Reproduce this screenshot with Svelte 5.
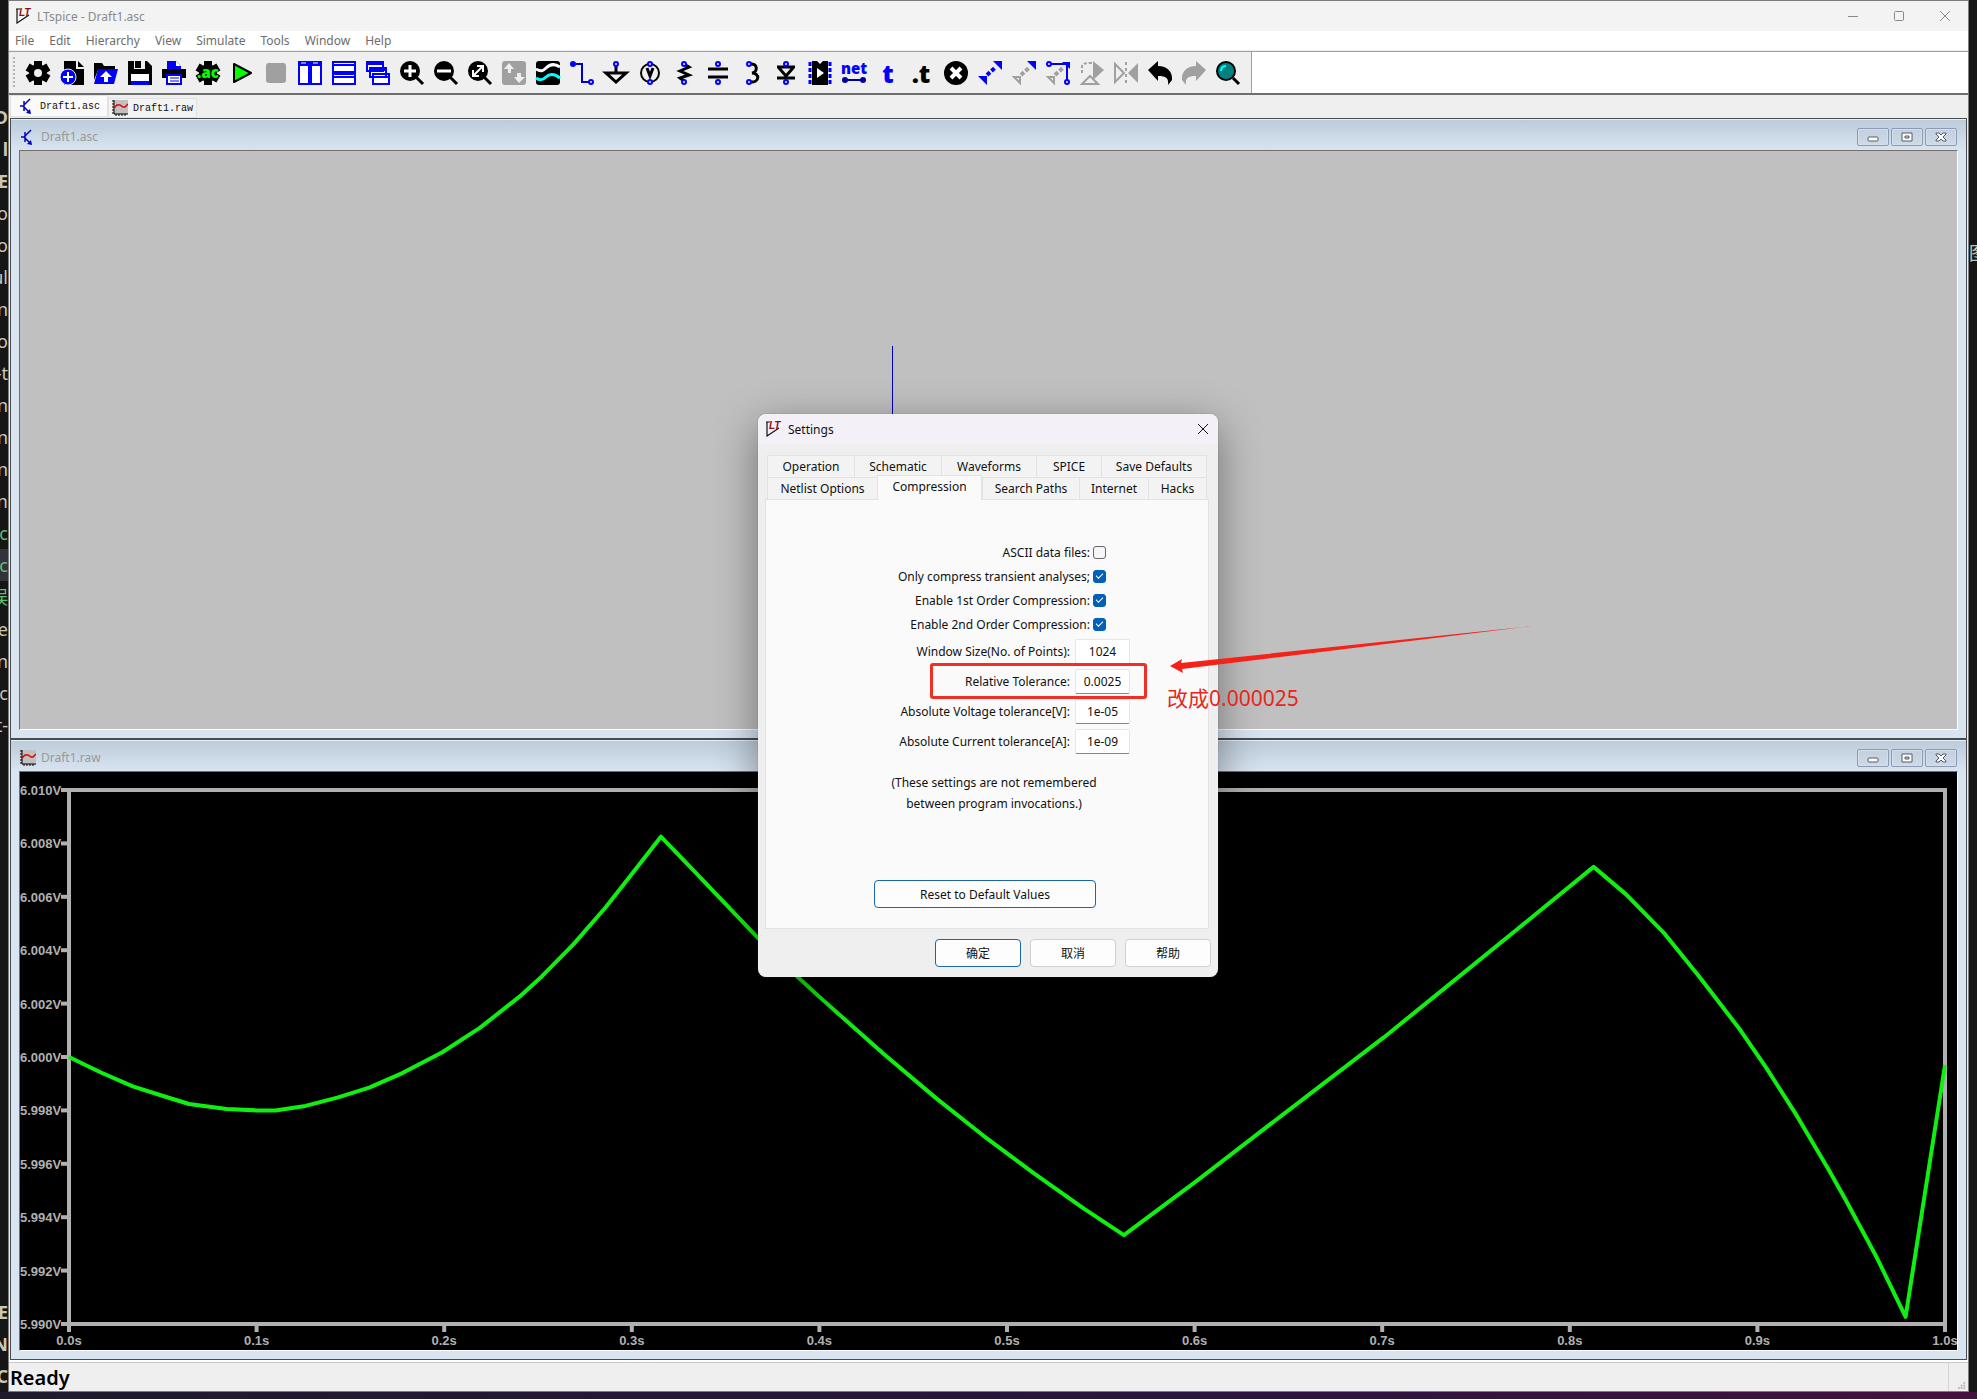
<script lang="ts">
  type Tool = { name: string; svg: string };

  const menus = ['File', 'Edit', 'Hierarchy', 'View', 'Simulate', 'Tools', 'Window', 'Help'];

  const gear =
    '<circle cx="12" cy="12" r="9"/><path d="M8 0h8v24H8z"/><path d="M8 0h8v24H8z" transform="rotate(60 12 12)"/><path d="M8 0h8v24H8z" transform="rotate(120 12 12)"/>';
  const lens = '<circle cx="10" cy="10" r="10"/><path d="M16 16l7 7" stroke="#000" stroke-width="3"/>';
  const pin = (x: number, y: number) =>
    `<circle cx="${x}" cy="${y}" r="2" fill="#efefef" stroke="#00f" stroke-width="2"/>`;
  const bold = 'font-family="Open Sans, sans-serif" font-weight="800"';

  const tools: Tool[] = [
    { name: 'Settings', svg: gear + '<circle cx="12" cy="12" r="4" fill="#efefef"/>' },
    {
      name: 'New schematic',
      svg: '<path d="M4 0h12v8h8v16H4z"/><path d="M18 0l6 6h-6z"/><circle cx="8" cy="16" r="8" fill="#00f" stroke="#efefef"/><path d="M8 11v10M3 16h10" stroke="#fff" stroke-width="2"/>',
    },
    {
      name: 'Open',
      svg: '<path d="M0 2h8l2 3h11v4H4L0 19z"/><path d="M4 8h20l-4 15H0z" fill="#00f"/><path d="M12 10l6 6h-4v5h-4v-5H6z" fill="#fff"/>',
    },
    {
      name: 'Save',
      svg: '<path d="M0 0h19l5 5v19H0z"/><path d="M6 0h11v8H6z" fill="#efefef"/><path d="M7 0h6v7H7z"/><path d="M3 13h18v11H3z" fill="#fff"/><path d="M3 20h18v4H3z" fill="#00f"/>',
    },
    {
      name: 'Print',
      svg: '<path d="M5 0h9l5 5v3H5z" fill="#00f"/><path d="M14 0v5h5z" fill="#fff"/><path d="M0 8h24v9H0z"/><path d="M5 14h14v9H5z" fill="#fff" stroke="#00f" stroke-width="2"/><path d="M8 17h9M8 20h9" stroke="#00f"/>',
    },
    {
      name: 'Configure analysis',
      svg: gear + `<text x="12" y="17" text-anchor="middle" font-size="15" fill="#0f0" ${bold}>.ac</text>`,
    },
    { name: 'Run', svg: '<path d="M4 3l17 9-17 9z" fill="#0f0" stroke="#000" stroke-width="2" stroke-linejoin="round"/>' },
    { name: 'Stop', svg: '<rect x="2" y="2" width="20" height="20" rx="3" fill="#a0a0a0"/>' },
    {
      name: 'Tile vertically',
      svg: '<path d="M1 1h10v22H1zM13 1h10v22H13z" fill="#fff" stroke="#00f" stroke-width="2"/><path d="M0 0h24v5H0z" fill="#00f"/><path d="M3 2h5M15 2h5" stroke="#fff"/>',
    },
    {
      name: 'Tile horizontally',
      svg: '<path d="M1 1h22v10H1zM1 13h22v10H1z" fill="#fff" stroke="#00f" stroke-width="2"/><path d="M1 4h22M1 16h22" stroke="#00f" stroke-width="2"/>',
    },
    {
      name: 'Cascade',
      svg: '<g fill="#fff" stroke="#00f" stroke-width="2"><path d="M1 1h16v9H1zM4 7h16v9H4zM7 13h16v10H7z"/><path d="M1 3h16M4 9h16M7 16h16"/></g>',
    },
    { name: 'Zoom in', svg: lens + '<path d="M10 4v12M4 10h12" stroke="#fff" stroke-width="3"/>' },
    { name: 'Zoom out', svg: lens + '<path d="M3 10h14" stroke="#fff" stroke-width="3"/>' },
    {
      name: 'Zoom to fit',
      svg: lens + '<path d="M5 15l10-10M9 5h6v6M5 9v6h6" stroke="#fff" stroke-width="2" fill="none"/>',
    },
    {
      name: 'Autorange',
      svg: '<rect width="24" height="24" rx="3" fill="#a0a0a0"/><path d="M7 2l5 6H9v4H6V8H2zM17 22l-5-6h3v-4h4v4h4z" fill="#efefef"/>',
    },
    {
      name: 'Waveforms',
      svg: '<rect width="24" height="24" rx="3"/><path d="M0 8c5 3 7 2 10-1s8-5 14-1" stroke="#fff" stroke-width="3" fill="none"/><path d="M0 17c4 3 7 2 10-1s8-4 14 1" stroke="#0ff" stroke-width="3" fill="none"/>',
    },
    {
      name: 'Wire',
      svg: '<path d="M3 3h9v18h7" stroke="#00c" stroke-width="2" fill="none"/><circle cx="3" cy="3" r="3" fill="#00f"/>' + pin(21, 21),
    },
    { name: 'Ground', svg: '<path d="M12 3v9M2 12h20l-10 9z" stroke="#000" stroke-width="3" fill="none"/>' + pin(12, 3) },
    {
      name: 'Voltage source',
      svg: '<circle cx="12" cy="12" r="9" fill="none" stroke="#000" stroke-width="2"/><path d="M9 7l3 8 3-8" stroke="#000" stroke-width="3" fill="none"/>' + pin(12, 3) + pin(12, 21),
    },
    {
      name: 'Resistor',
      svg: '<path d="M12 3l5 3-9 4 9 4-9 3 4 3" stroke="#000" stroke-width="3" fill="none"/>' + pin(12, 3) + pin(12, 21),
    },
    { name: 'Capacitor', svg: '<path d="M2 8h20M2 16h20" stroke="#000" stroke-width="3"/>' + pin(12, 3) + pin(12, 21) },
    {
      name: 'Inductor',
      svg: '<path d="M10 3c8-1 8 8 2 9 8 0 8 10-2 9" stroke="#000" stroke-width="3" fill="none"/>' + pin(9, 3) + pin(9, 21),
    },
    {
      name: 'Diode',
      svg: '<path d="M3 6h18M5 7l7 8 7-8M3 17h18" stroke="#000" stroke-width="3" fill="none"/>' + pin(12, 3) + pin(12, 21),
    },
    {
      name: 'Component',
      svg: '<path d="M4 0h5l3 3 3-3h5v24H4z"/><path d="M9 7l7 5-7 5z" fill="#fff"/><path d="M2 1v22M22 1v22" stroke="#00f" stroke-width="3" stroke-dasharray="4 2"/>',
    },
    {
      name: 'Net name',
      svg: `<text x="12" y="13" text-anchor="middle" font-size="15" fill="#00f" ${bold}>net</text><path d="M2 19h20" stroke="#00009c" stroke-width="2"/><circle cx="3" cy="19" r="3" fill="#00009c"/><circle cx="21" cy="19" r="3" fill="#00009c"/>`,
    },
    { name: 'Text', svg: `<text x="12" y="22" text-anchor="middle" font-size="25" fill="#00f" ${bold}>t</text>` },
    { name: 'SPICE directive', svg: `<text x="11" y="22" text-anchor="middle" font-size="25" ${bold}>.t</text>` },
    {
      name: 'Delete',
      svg: '<circle cx="12" cy="12" r="12"/><path d="M7 7l10 10M17 7L7 17" stroke="#fff" stroke-width="4"/>',
    },
    {
      name: 'Copy',
      svg: '<path d="M15 0h9v9zM0 15h9v9z" fill="#00f"/><path d="M9 14l9-8" stroke="#00f" stroke-width="4" stroke-dasharray="4 2"/>',
    },
    {
      name: 'Move',
      svg: '<path d="M15 0h9v9z" fill="#00f"/><path d="M2 16h6v6z" fill="none" stroke="#a0a0a0" stroke-width="2"/><path d="M9 14l9-8" stroke="#a0a0a0" stroke-width="4" stroke-dasharray="4 2"/>',
    },
    {
      name: 'Drag',
      svg: '<path d="M3 3h18v18" fill="none" stroke="#00f" stroke-width="2"/><path d="M16 1h8v7z" fill="#00f"/><path d="M2 16h6v6z" fill="none" stroke="#a0a0a0" stroke-width="2"/><path d="M9 14l9-8" stroke="#a0a0a0" stroke-width="4" stroke-dasharray="4 2"/>' + pin(3, 3) + pin(21, 21),
    },
    {
      name: 'Rotate',
      svg: '<path d="M13 0l11 9-11 10z" fill="#a0a0a0"/><path d="M2 12V5c0-2 3-3 10-3" fill="none" stroke="#a0a0a0" stroke-width="2" stroke-dasharray="3 2"/><path d="M2 23l8-8 8 8z" fill="none" stroke="#a0a0a0" stroke-width="2"/>',
    },
    {
      name: 'Mirror',
      svg: '<path d="M1 3l9 9-9 9z" fill="none" stroke="#a0a0a0" stroke-width="2"/><path d="M24 2v20L14 12z" fill="#a0a0a0"/><path d="M12 1v22" stroke="#a0a0a0" stroke-width="2" stroke-dasharray="3 3"/>',
    },
    { name: 'Undo', svg: '<path d="M0 9l10-9v5c9 0 15 6 14 14l-4 5c1-7-2-9-10-9v5z"/>' },
    { name: 'Redo', svg: '<path d="M24 9L14 0v5C5 5-1 11 0 19l4 5c-1-7 2-9 10-9v5z" fill="#a0a0a0"/>' },
    {
      name: 'Find',
      svg: '<circle cx="10" cy="10" r="9" fill="#008080" stroke="#000" stroke-width="2"/><path d="M17 17l6 6" stroke="#000" stroke-width="3"/><path d="M5 10c0-3 2-5 5-5" stroke="#0ff" stroke-width="2" fill="none"/>',
    },
  ];

  // text of the editor behind the window, cut off by it
  const behindTop = ['D', 'l', 'E', 'o', 'o', 'ul', 'n', 'o', '-t', 'n', 'n', 'n', 'un', 'c', 'c', '误', 've', 'n', 'c', 't-'];
  const behindBottom = ['E', 'N', 'C'];

  const upperTabs = ['Operation', 'Schematic', 'Waveforms', 'SPICE', 'Save Defaults'];
  const lowerTabs = ['Netlist Options', 'Compression', 'Search Paths', 'Internet', 'Hacks'];

  let checks = [
    { id: 'ascii', label: 'ASCII data files:', on: false },
    { id: 'transient', label: 'Only compress transient analyses;', on: true },
    { id: 'first', label: 'Enable 1st Order Compression:', on: true },
    { id: 'second', label: 'Enable 2nd Order Compression:', on: true },
  ];

  let fields = [
    { id: 'points', label: 'Window Size(No. of Points):', value: '1024' },
    { id: 'reltol', label: 'Relative Tolerance:', value: '0.0025' },
    { id: 'vtol', label: 'Absolute Voltage tolerance[V]:', value: '1e-05' },
    { id: 'itol', label: 'Absolute Current tolerance[A]:', value: '1e-09' },
  ];

  // [seconds, millivolts above 6V]
  const trace = [
    [0, 0], [0.017, -0.58], [0.034, -1.1], [0.051, -1.48], [0.064, -1.76], [0.084, -1.95], [0.1, -2],
    [0.11, -2], [0.126, -1.83], [0.143, -1.52], [0.16, -1.15], [0.178, -0.59], [0.199, 0.18],
    [0.219, 1.09], [0.24, 2.25], [0.252, 3.02], [0.269, 4.23], [0.286, 5.6], [0.299, 6.76],
    [0.3155, 8.25], [0.333, 6.98], [0.353, 5.51], [0.369, 4.33], [0.389, 2.96], [0.4, 2.25],
    [0.434, 0.13], [0.462, -1.53], [0.4875, -2.95], [0.514, -4.34], [0.541, -5.68], [0.5623, -6.67],
    [0.602, -4.59], [0.635, -2.8], [0.669, -0.98], [0.701, 0.74], [0.736, 2.73], [0.77, 4.67],
    [0.8127, 7.12], [0.83, 6.09], [0.85, 4.66], [0.87, 2.92], [0.891, 1.0], [0.905, -0.44],
    [0.921, -2.2], [0.938, -4.22], [0.947, -5.35], [0.9637, -7.52], [0.979, -9.73], [1, -0.3],
  ];

  const plot = { left: 49, right: 1925, top: 18, bottom: 552 };
  const px = (t: number) => plot.left + t * (plot.right - plot.left);
  const py = (mv: number) => plot.top + ((10 - mv) / 20) * (plot.bottom - plot.top);
  const points = trace.map(([t, v]) => `${px(t).toFixed(1)},${py(v).toFixed(1)}`).join(' ');
  const ticks = Array.from({ length: 11 }, (_, i) => i);
</script>

{#snippet logo()}
  <svg class="logo" viewBox="0 0 16 16" aria-hidden="true">
    <path d="M1 1v14l12-8" fill="none" stroke="#111" stroke-width="1.2" />
    <path d="M0 1h4" stroke="#111" />
    <text x="3" y="8" font-family="Liberation Sans, sans-serif" font-size="10" font-weight="bold" font-style="italic" fill="#8a0f14">LT</text>
  </svg>
{/snippet}

{#snippet transistor()}
  <svg class="doc-icon" viewBox="0 0 16 16" aria-hidden="true">
    <path d="M1 8h4M5 3v10M5 7l6-6M5 9l5 5" fill="none" stroke="#0000c0" stroke-width="1.5" />
    <path d="M12 16l-5-1 4-4z" fill="#0000c0" />
  </svg>
{/snippet}

{#snippet chart()}
  <svg class="doc-icon" viewBox="0 0 16 16" aria-hidden="true">
    <path d="M2 0h14v14H2z" fill="#c0c0c0" />
    <path d="M2 0v14h14M0 1h2M0 4h2M0 7h2M0 10h2M0 13h2M4 14v2M7 14v2M10 14v2M13 14v2" fill="none" stroke="#000" />
    <path d="M2 8l3-3 3 0 3 2 2 0 3-3" fill="none" stroke="#e00000" stroke-width="1.5" />
  </svg>
{/snippet}

{#snippet caption()}
  <div class="mdi-buttons">
    <button type="button" aria-label="Minimize">
      <svg viewBox="0 0 12 10"><rect x="1" y="5" width="10" height="4" rx="1" fill="#fff" stroke="#555a66" /></svg>
    </button>
    <button type="button" aria-label="Maximize">
      <svg viewBox="0 0 12 10"><path d="M1 1h10v8H1z" fill="#fff" stroke="#555a66" /><path d="M4 4h4v2H4z" fill="#ccd6e4" stroke="#555a66" /></svg>
    </button>
    <button type="button" aria-label="Close">
      <svg viewBox="0 0 12 10"><path d="M1 1h3l2 2 2-2h3v1L8 5l3 3v1H8L6 7 4 9H1V8l3-3-3-3z" fill="#fff" stroke="#555a66" /></svg>
    </button>
  </div>
{/snippet}

<div class="desktop">
  <div class="behind" aria-hidden="true">
    <div>
      {#each behindTop as s, i}
        <span class:green={i > 12 && i < 16} class:lit={i === 14} class:strong={i < 3}>{s}</span>
      {/each}
    </div>
    <div>
      {#each behindBottom as s}
        <span class="strong">{s}</span>
      {/each}
    </div>
  </div>

  <main class="app">
    <header class="titlebar">
      {@render logo()}
      <span class="title">LTspice - Draft1.asc</span>
      <div class="controls">
        <button type="button" aria-label="Minimize"><svg viewBox="0 0 10 10"><path d="M0 5.500h10" /></svg></button>
        <button type="button" aria-label="Maximize"><svg viewBox="0 0 10 10"><rect x=".5" y=".5" width="9" height="9" rx="1" /></svg></button>
        <button type="button" aria-label="Close"><svg viewBox="0 0 10 10"><path d="M0 0l10 10M10 0L0 10" /></svg></button>
      </div>
    </header>

    <nav class="menu">
      {#each menus as m}
        <button type="button">{m}</button>
      {/each}
    </nav>

    <div class="toolrow">
      <div class="toolbar" role="toolbar" aria-label="Tools">
        <span class="grip"></span>
        {#each tools as t}
          <button type="button" aria-label={t.name}>
            <svg viewBox="0 0 24 24">{@html t.svg}</svg>
          </button>
        {/each}
      </div>
    </div>

    <div class="doc-tabs">
      <button type="button" class="active">{@render transistor()}Draft1.asc</button>
      <button type="button">{@render chart()}Draft1.raw</button>
    </div>

    <div class="mdi">
      <section class="child schematic">
        <header>
          {@render transistor()}
          <h2>Draft1.asc</h2>
          {@render caption()}
        </header>
        <div class="client sheet">
          <span class="wire"></span>
        </div>
      </section>

      <section class="child">
        <header>
          {@render chart()}
          <h2>Draft1.raw</h2>
          {@render caption()}
        </header>
        <div class="client">
          <svg class="plot" viewBox="0 0 1937 578" role="img" aria-label="Waveform">
            <rect x={plot.left} y={plot.top} width={plot.right - plot.left} height={plot.bottom - plot.top} class="axis" />
            {#each ticks as i}
              <path class="axis" d="M41 {py(10 - 2 * i)}H{plot.left}" />
              <text x="0" y={py(10 - 2 * i) + 5}>{(6.01 - 0.002 * i).toFixed(3)}V</text>
              <path class="axis" d="M{px(i / 10)} {plot.bottom}v8" />
              <text class="mid" x={px(i / 10)} y="573">{(i / 10).toFixed(1)}s</text>
            {/each}
            <polyline class="trace" {points} />
          </svg>
        </div>
      </section>
    </div>

    <footer class="status">
      <span>Ready</span>
      <svg viewBox="0 0 9 9" aria-hidden="true">
        <path d="M6 0h2v2H6zM3 3h2v2H3zM6 3h2v2H6zM0 6h2v2H0zM3 6h2v2H3zM6 6h2v2H6z" fill="#b4b4b4" />
      </svg>
    </footer>
  </main>

  <div class="behind right" aria-hidden="true"><span>图</span></div>
  <div class="taskbar"></div>

  <div class="dialog" role="dialog" aria-labelledby="dialog-title">
    <header>
      {@render logo()}
      <h1 id="dialog-title">Settings</h1>
      <button type="button" aria-label="Close"><svg viewBox="0 0 10 10"><path d="M0 0l10 10M10 0L0 10" /></svg></button>
    </header>

    <div class="tabs" role="tablist">
      <div class="tab-row upper">
        {#each upperTabs as t}
          <button type="button" role="tab" aria-selected="false">{t}</button>
        {/each}
      </div>
      <div class="tab-row lower">
        {#each lowerTabs as t}
          <button type="button" role="tab" aria-selected={t === 'Compression'}>{t}</button>
        {/each}
      </div>
    </div>

    <form class="panel">
      {#each checks as c}
        <div class="check">
          <label for={c.id}>{c.label}</label>
          <input id={c.id} type="checkbox" bind:checked={c.on} />
        </div>
      {/each}
      {#each fields as f}
        <div class="field">
          <label for={f.id}>{f.label}</label>
          <input id={f.id} type="text" bind:value={f.value} />
        </div>
      {/each}
      <p>(These settings are not remembered<br />between program invocations.)</p>
      <button type="button" class="btn primary reset">Reset to Default Values</button>
    </form>

    <div class="actions">
      <button type="button" class="btn primary">确定</button>
      <button type="button" class="btn">取消</button>
      <button type="button" class="btn">帮助</button>
    </div>

    <span class="mark"></span>
    <svg class="arrow" viewBox="0 0 362 50" aria-hidden="true">
      <path d="M0 41l12-7-1 4L362 1 12 44l1 4z" fill="#f5221a" />
    </svg>
    <span class="note">改成0.000025</span>
  </div>
</div>

<style>
  :global(body) {
    margin: 0;
    background: #161616;
  }

  .desktop {
    position: relative;
    display: grid;
    grid-template-columns: 8px minmax(0, 1fr) 8px;
    grid-template-rows: 1fr 7px;
    min-height: 100vh;
    font-family: 'Noto Sans', 'Noto Sans CJK SC', sans-serif;
    font-size: 12px;
    color: #111;
  }

  button {
    padding: 0;
    border: 0;
    background: none;
    font: inherit;
    color: inherit;
  }

  h1,
  h2,
  p {
    margin: 0;
    font-size: 12px;
    font-weight: 400;
  }

  .behind {
    display: flex;
    flex-direction: column;
    justify-content: space-between;
    box-sizing: border-box;
    padding: 101px 0 0;
    overflow: hidden;
    background: #161616;
    color: #c8c8b8;
    font-size: 18px;
    line-height: 32px;
    white-space: nowrap;
  }

  .behind span {
    display: flex;
    justify-content: flex-end;
    height: 32px;
  }

  .behind .strong {
    font-weight: 700;
  }

  .behind .green {
    color: #5fbf77;
  }

  .behind .lit {
    background: #33333b;
  }

  .behind.right {
    padding: 237px 0 0;
  }

  .behind.right span {
    justify-content: flex-start;
  }

  .taskbar {
    grid-column: 1 / -1;
    background: linear-gradient(90deg, #1f1b2c, #2a1440 60%, #451040);
  }

  .app {
    display: flex;
    flex-direction: column;
    box-sizing: border-box;
    border: 1px solid #7c7c7c;
    background: #efefef;
  }

  .titlebar {
    display: flex;
    align-items: center;
    height: 30px;
    padding-left: 7px;
    background: #f3f3f3;
    color: #8a8a8a;
  }

  .logo {
    width: 16px;
    height: 16px;
  }

  .title {
    margin-left: 5px;
  }

  .controls {
    display: flex;
    margin-left: auto;
  }

  .controls button {
    display: grid;
    place-items: center;
    width: 46px;
    height: 30px;
  }

  .controls svg,
  .dialog header button svg {
    width: 10px;
    height: 10px;
    overflow: visible;
    fill: none;
    stroke: #8a8a8a;
  }

  .menu {
    display: flex;
    gap: 15px;
    height: 19px;
    padding-left: 6px;
    border-bottom: 1px solid #efefef;
    background: #fff;
    color: #6d6d6d;
    line-height: 19px;
  }

  .toolrow {
    border-top: 1px solid #a0a0a0;
    border-bottom: 2px solid #6e6e6e;
    background: #fff;
  }

  .toolbar {
    display: flex;
    align-items: center;
    width: max-content;
    height: 41px;
    padding-right: 6px;
    border-right: 1px solid #a0a0a0;
    background: #efefef;
  }

  .grip {
    width: 2px;
    height: 32px;
    margin: 0 6px 0 4px;
    background: repeating-linear-gradient(#b4b4b4 0 2px, #efefef 2px 4px);
  }

  .toolbar button {
    display: grid;
    place-items: center;
    width: 34px;
    height: 34px;
  }

  .toolbar svg {
    width: 24px;
    height: 24px;
    overflow: visible;
  }

  .doc-tabs {
    display: flex;
    height: 23px;
    padding-left: 1px;
    font-family: 'Liberation Mono', monospace;
    font-size: 10px;
  }

  .doc-tabs button {
    display: flex;
    align-items: center;
    gap: 5px;
    box-sizing: border-box;
    height: 20px;
    margin-top: 3px;
    padding: 0 3px;
    border: 1px solid #e2e2e2;
    background: #f3f3f3;
  }

  .doc-tabs .active {
    height: 22px;
    margin-top: 0;
    padding: 0 7px 0 8px;
    background: #fafafa;
  }

  .doc-icon {
    width: 16px;
    height: 16px;
  }

  .mdi {
    display: flex;
    flex: 1;
    flex-direction: column;
    padding: 0 1px;
  }

  .child {
    display: flex;
    flex-direction: column;
    padding: 0 8px 8px;
    border: 1px solid #484c50;
    background: #d8e4f0;
  }

  .child header {
    display: flex;
    align-items: center;
    box-sizing: border-box;
    height: 31px;
    margin: 0 -8px;
    padding: 4px 9px 0;
    background: linear-gradient(#bccbda, #d8e4f0);
    box-shadow: inset 0 1px #e6eef6;
  }

  .child h2 {
    margin-left: 5px;
    color: #999;
  }

  .mdi-buttons {
    display: flex;
    gap: 2px;
    margin-left: auto;
  }

  .mdi-buttons button {
    display: grid;
    place-items: center;
    box-sizing: border-box;
    width: 32px;
    height: 18px;
    border: 1px solid #8c9ab4;
    border-radius: 2px;
    background: linear-gradient(#c2cfde, #cedae8);
    box-shadow: inset 0 0 0 1px #d4dfec;
  }

  .mdi-buttons svg {
    width: 12px;
    height: 10px;
  }

  .schematic {
    flex: 1;
  }

  .client {
    border: 1px solid #707070;
    border-right-color: #fff;
    border-bottom-color: #fff;
    background: #000;
  }

  .sheet {
    position: relative;
    flex: 1;
    background: #c0c0c0;
  }

  .wire {
    position: absolute;
    top: 195px;
    left: 872px;
    width: 1px;
    height: 90px;
    background: #0000c0;
  }

  .plot {
    display: block;
    width: 100%;
  }

  .axis {
    fill: none;
    stroke: #b0b0b0;
    stroke-width: 4;
  }

  .plot text {
    fill: #b0b0b0;
    font: bold 13px 'Liberation Sans', sans-serif;
  }

  .plot .mid {
    text-anchor: middle;
  }

  .trace {
    fill: none;
    stroke: #10f010;
    stroke-width: 4;
    stroke-linejoin: round;
  }

  .status {
    display: flex;
    align-items: center;
    height: 28px;
    padding: 0 2px 0 1px;
    border-top: 1px solid #c8c8c8;
    box-shadow: 0 -2px #fff;
    margin-top: 2px;
    color: #000;
    font-size: 20px;
    font-weight: 600;
  }

  .status svg {
    align-self: stretch;
    box-sizing: border-box;
    width: 18px;
    margin-left: auto;
    padding: 18px 0 0 9px;
    border-left: 1px solid #d4d4d4;
  }

  .dialog {
    position: absolute;
    top: 414px;
    left: 758px;
    box-sizing: border-box;
    width: 460px;
    padding-bottom: 10px;
    border-radius: 8px;
    background: #efefef;
    box-shadow: 0 0 1px #555, 0 12px 44px rgba(0, 0, 0, 0.42);
  }

  .dialog header {
    display: flex;
    align-items: center;
    height: 30px;
    padding: 0 10px 0 8px;
    border-radius: 8px 8px 0 0;
    background: #f3f0f8;
  }

  .dialog h1 {
    margin-left: 6px;
  }

  .dialog header button {
    display: flex;
    margin-left: auto;
  }

  .dialog header button svg {
    stroke: #111;
  }

  .tabs {
    padding: 11px 11px 0 9px;
  }

  .tab-row {
    display: grid;
    height: 22px;
  }

  .upper {
    grid-template-columns: 87px 87px 95px 65px 1fr;
  }

  .lower {
    grid-template-columns: 110px 105px 97px 69px 1fr;
  }

  .tab-row button {
    border: 1px solid #e2e2e2;
    border-width: 1px 0 0 1px;
    background: #f3f3f3;
  }

  .tab-row button:last-child {
    border-right-width: 1px;
  }

  .tab-row [aria-selected='true'] {
    z-index: 1;
    margin: -2px 0 -1px;
    padding-bottom: 3px;
    border-right-width: 1px;
    background: #fafafa;
  }

  .panel {
    display: flex;
    flex-direction: column;
    box-sizing: border-box;
    height: 430px;
    margin: 0 9px 0 7px;
    padding-top: 40px;
    border: 1px solid #e2e2e2;
    background: #fafafa;
  }

  .check,
  .field {
    display: flex;
    align-items: center;
    justify-content: flex-end;
  }

  .check {
    gap: 3px;
    height: 24px;
    padding-right: 102px;
  }

  .check input {
    appearance: none;
    width: 13px;
    height: 13px;
    margin: 0;
    border: 1px solid #666;
    border-radius: 3px;
    background: #f6f6f6;
    box-sizing: border-box;
  }

  .check input:checked {
    border-color: #005fb8;
    background: #005fb8;
  }

  .check input:checked::after {
    content: '';
    display: block;
    width: 6px;
    height: 3px;
    margin: 2px 0 0 2px;
    border: 1px solid #fff;
    border-width: 0 0 1px 1px;
    transform: rotate(-45deg);
  }

  .field {
    gap: 5px;
    height: 30px;
    padding-right: 78px;
  }

  .field input {
    box-sizing: border-box;
    width: 55px;
    height: 25px;
    padding: 0;
    border: 1px solid #e6e6e6;
    border-bottom-color: #868686;
    border-radius: 2px;
    background: #fff;
    font: inherit;
    color: inherit;
    text-align: center;
  }

  .panel p {
    margin-top: 16px;
    padding-left: 14px;
    line-height: 21px;
    text-align: center;
  }

  .btn {
    box-sizing: border-box;
    width: 86px;
    height: 28px;
    border: 1px solid #d0d0d0;
    border-radius: 4px;
    background: #fdfdfd;
  }

  .primary {
    border-color: #1a66a8;
  }

  .reset {
    width: 222px;
    margin: 66px 0 0 108px;
  }

  .actions {
    display: flex;
    justify-content: flex-end;
    gap: 9px;
    padding: 10px 7px 0 0;
  }

  .mark {
    position: absolute;
    top: 249px;
    left: 172px;
    box-sizing: border-box;
    width: 217px;
    height: 36px;
    border: 3px solid #f03024;
    border-radius: 3px;
  }

  .arrow {
    position: absolute;
    top: 211px;
    left: 412px;
    width: 362px;
    height: 50px;
  }

  .note {
    position: absolute;
    top: 268px;
    left: 409px;
    color: #e8261c;
    font-size: 21px;
    line-height: 32px;
    white-space: nowrap;
  }
</style>
